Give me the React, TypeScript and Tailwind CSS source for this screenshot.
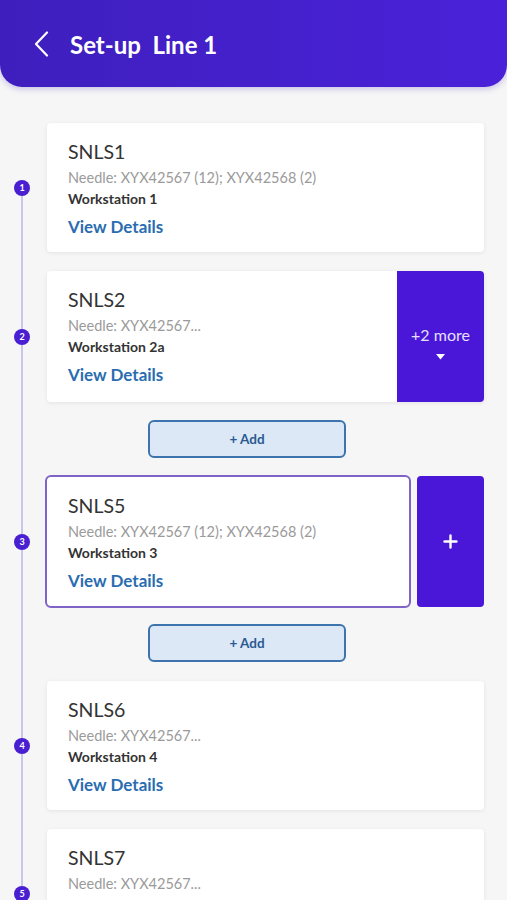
import React from "react";

function Circle({ n }: { n: number }) {
  return (
    <div className="w-[45px] shrink-0 flex">
      <div className="ml-[14px] w-[16px] h-[16px] rounded-full bg-[#4a1fd2] text-white text-[9px] font-bold flex items-center justify-center leading-none relative z-10">
        {n}
      </div>
    </div>
  );
}

function CardBody({ title, needle, ws }: { title: string; needle: string; ws: string }) {
  return (
    <div className="pl-[21px] pt-[17px] pb-[13px]">
      <div className="text-[19.5px] leading-[24px] text-[#333333]">{title}</div>
      <div className="mt-[4px] text-[14.5px] leading-[20px] text-[#9a9a9a] whitespace-nowrap">{needle}</div>
      <div className="mt-[1px] text-[14px] leading-[20px] font-bold text-[#333333]">{ws}</div>
      <div className="mt-[6px] text-[17px] leading-[24px] font-bold text-[#2a6cb0]">View Details</div>
    </div>
  );
}

function AddButton() {
  return (
    <div className="flex">
      <div className="ml-[148px] w-[198px] h-[38px] rounded-[6px] border-[2px] border-[#3d74ad] bg-[#dce8f6] flex items-center justify-center text-[13.5px] font-bold text-[#2a5a92]">
        + Add
      </div>
    </div>
  );
}

export default function App() {
  return (
    <div className="h-[900px] overflow-hidden bg-[#f6f6f6] font-['Lato','Noto_Sans',sans-serif]">
      <header className="h-[87px] rounded-b-[22px] bg-linear-to-r from-[#3e1fbd] to-[#4a21d9] shadow-[0_2px_6px_rgba(60,30,180,0.25)] flex items-center pl-[34px]">
        <svg width="15" height="26" viewBox="0 0 15 26" fill="none" className="mt-[1px]">
          <path d="M13 1.5 L2 13 L13 24.5" stroke="white" strokeWidth="2.2" strokeLinecap="round" strokeLinejoin="round" />
        </svg>
        <h1 className="ml-[21px] mt-[2px] text-white text-[24px] font-bold leading-none whitespace-pre">Set-up  Line 1</h1>
      </header>

      <div className="relative pt-[36px]">
        <div className="absolute left-[21px] top-[100px] bottom-0 w-[2px] bg-[#cbc4ef]" />

        <div className="flex flex-col">
          {/* Row 1 */}
          <div className="flex items-center pr-[23px]">
            <Circle n={1} />
            <div className="ml-[2px] flex-1 bg-white rounded-[4px] shadow-[0_1px_4px_rgba(0,0,0,0.08)]">
              <CardBody title="SNLS1" needle="Needle: XYX42567 (12); XYX42568 (2)" ws="Workstation 1" />
            </div>
          </div>

          {/* Row 2 */}
          <div className="mt-[19px] flex items-center pr-[23px]">
            <Circle n={2} />
            <div className="ml-[2px] flex-1 flex h-[131px] rounded-[4px] shadow-[0_1px_4px_rgba(0,0,0,0.08)]">
              <div className="flex-1 bg-white rounded-l-[4px]">
                <CardBody title="SNLS2" needle="Needle: XYX42567..." ws="Workstation 2a" />
              </div>
              <div className="w-[87px] bg-[#4a16d8] rounded-r-[4px] flex flex-col items-center justify-center pt-[12px]">
                <div className="text-[16px] leading-[20px] text-[#e6e0ff]">+2 more</div>
                <svg width="9" height="6" viewBox="0 0 9 6" className="mt-[9px]">
                  <path d="M0 0 H9 L4.5 5.5 Z" fill="white" />
                </svg>
              </div>
            </div>
          </div>

          <div className="mt-[18px]">
            <AddButton />
          </div>

          {/* Row 3 */}
          <div className="mt-[17px] flex items-center pr-[23px]">
            <Circle n={3} />
            <div className="flex-1 flex items-stretch gap-[6px] h-[133px]">
              <div className="flex-1 bg-white rounded-[6px] border-[2px] border-[#7f63c6]">
                <CardBody title="SNLS5" needle="Needle: XYX42567 (12); XYX42568 (2)" ws="Workstation 3" />
              </div>
              <div className="w-[67px] my-[1px] bg-[#4a16d8] rounded-[4px] flex items-center justify-center">
                <svg width="15" height="15" viewBox="0 0 15 15">
                  <path d="M7.5 1.5 V13.5 M1.5 7.5 H13.5" stroke="white" strokeWidth="2.4" strokeLinecap="round" />
                </svg>
              </div>
            </div>
          </div>

          <div className="mt-[16px]">
            <AddButton />
          </div>

          {/* Row 4 */}
          <div className="mt-[19px] flex items-center pr-[23px]">
            <Circle n={4} />
            <div className="ml-[2px] flex-1 bg-white rounded-[4px] shadow-[0_1px_4px_rgba(0,0,0,0.08)]">
              <CardBody title="SNLS6" needle="Needle: XYX42567..." ws="Workstation 4" />
            </div>
          </div>

          {/* Row 5 */}
          <div className="mt-[19px] flex items-center pr-[23px]">
            <Circle n={5} />
            <div className="ml-[2px] flex-1 bg-white rounded-[4px] shadow-[0_1px_4px_rgba(0,0,0,0.08)]">
              <CardBody title="SNLS7" needle="Needle: XYX42567..." ws="Workstation 5" />
            </div>
          </div>
        </div>
      </div>
    </div>
  );
}
